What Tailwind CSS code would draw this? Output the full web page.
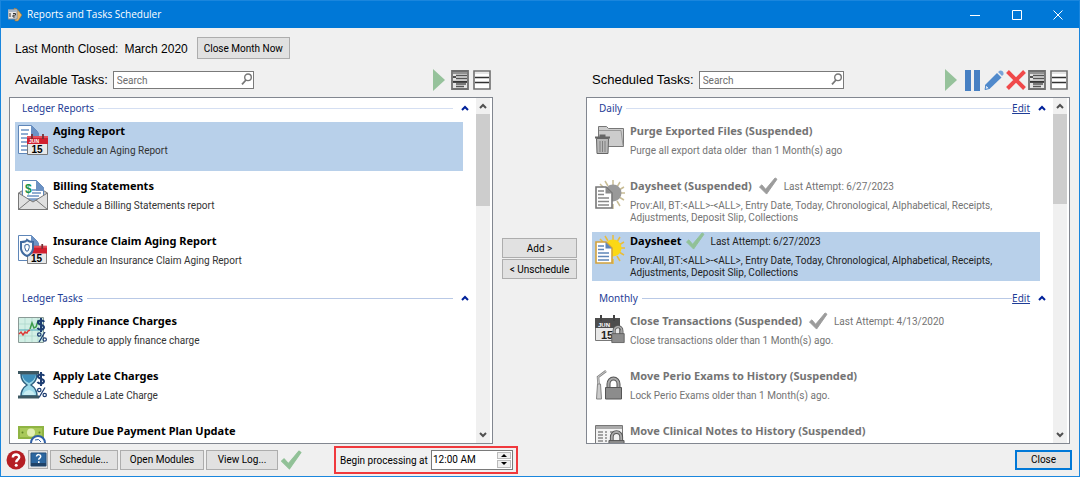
<!DOCTYPE html>
<html lang="en">
<head>
  <meta charset="UTF-8" />
  <meta name="viewport" content="width=device-width, initial-scale=1.0"/>
  <title>Reports and Tasks Scheduler</title>
  <script src="https://cdn.jsdelivr.net/npm/@tailwindcss/browser@4"></script>
</head>
<body class="h-screen flex flex-col overflow-hidden bg-[#f0f0f0] border border-[#1a86dd] text-black text-[10px] font-['Liberation_Sans',sans-serif]">

  <!-- Shared icons -->
  <svg class="hidden">
    <symbol id="caret" viewBox="0 0 8 8"><path d="M1 6l3-3 3 3" fill="none" stroke="currentColor" stroke-width="2"/></symbol>
    <symbol id="play" viewBox="0 0 12 22"><path d="M0 0l12 11L0 22z" fill="#96c29b"/></symbol>
    <symbol id="detail" viewBox="0 0 18 20">
      <path d="M1 1h16v18H1z" fill="#e4e4e4" stroke="#707070" stroke-width="1.800"/>
      <path d="M2 3h14M2 11.500h14" stroke="#777" stroke-width="1.600"/>
      <path d="M5 5.500h11M5 8.500h11M5 14h10M5 16.500h8" stroke="#555" stroke-width="1.400"/>
      <path d="M2 7h3M2 12h14" stroke="#222" stroke-width="1.500"/>
    </symbol>
    <symbol id="compact" viewBox="0 0 18 20">
      <path d="M1 1h16v18H1z" fill="#fff" stroke="#707070" stroke-width="1.600"/>
      <path d="M2 7.500h14M2 12.500h14" stroke="#333" stroke-width="1.700"/>
      <path d="M2 3h14" stroke="#ccc"/>
    </symbol>
    <symbol id="lens" viewBox="0 0 12 12"><circle cx="7" cy="4.300" r="3.300" fill="none" stroke="#777" stroke-width="1.400"/><path d="M5 7L1 11.300" stroke="#777" stroke-width="1.800"/></symbol>
    <symbol id="tick" viewBox="0 0 20 19"><path d="M1 10.500l2.500-2.200 4 4.700L17.500 1l2 1.300L8.500 18z" fill="currentColor" stroke="currentColor" stroke-linejoin="round"/></symbol>
    <symbol id="dollar" viewBox="0 0 10 14"><path d="M8.300 3.800C7.500 2.300 2 1.800 2 4.400s6 2 6 4.900-5.500 2.800-6.500.6M5 0v14" fill="none" stroke="#1d3d72" stroke-width="2"/></symbol>
    <symbol id="percent" viewBox="0 0 10 10"><circle cx="2.300" cy="2.500" r="1.700" fill="none" stroke="#1d3d72" stroke-width="1.200"/><circle cx="7.700" cy="7.500" r="1.700" fill="none" stroke="#1d3d72" stroke-width="1.200"/><path d="M8 0L2 10" stroke="#1d3d72" stroke-width="1.300"/></symbol>
    <symbol id="calendar" viewBox="0 0 21 22">
      <path d="M.500 3.500h20v18H.500z" fill="#e9e9e9" stroke="#777"/>
      <path d="M0 3h21v8H0z" fill="#d1202f"/>
      <path d="M0 3h21v2H0z" fill="#e5505a"/>
      <path d="M5 1v5M16 1v5" stroke="#773036" stroke-width="1.800"/>
    </symbol>
    <symbol id="lock" viewBox="0 0 18 24">
      <path d="M4 13V8a5 5.500 0 0 1 10 0v5" fill="none" stroke="#555" stroke-width="4"/>
      <path d="M4 13V8a5 5.500 0 0 1 10 0v5" fill="none" stroke="#aaa" stroke-width="2"/>
      <path d="M1 11.500h16V23H1z" fill="#8c8c8c" stroke="#555"/>
    </symbol>
  </svg>

  <!-- Title bar -->
  <header class="flex h-[27px] shrink-0 items-center bg-[#0078d7] pl-[7px] text-white">
    <svg class="h-[14px] w-[15px]" viewBox="0 0 15 14">
      <path d="M6 0l3 1 5 6-4 6H7z" fill="#e8b565" stroke="#8d6a3a" stroke-width=".600"/>
      <path d="M0 2h9v9H0z" fill="#e8e8e8" stroke="#7f8b99"/><path d="M0 1.500h9v2.500H0z" fill="#a9b6c5"/>
      <path d="M2 5v4M5 5.500h2.500v1.700H5v1.800h2.500" fill="none" stroke="#333"/>
    </svg>
    <h1 class="ml-1 grow font-['Open_Sans',sans-serif]">Reports and Tasks Scheduler</h1>
    <button type="button" aria-label="Minimize" class="flex h-full w-[42px] items-center justify-center"><svg class="h-[10px] w-[10px]" viewBox="0 0 10 10"><path d="M0 5.500h10" stroke="#fff"/></svg></button>
    <button type="button" aria-label="Maximize" class="flex h-full w-[41px] items-center justify-center"><svg class="h-[10px] w-[10px]" viewBox="0 0 10 10"><path d="M.500.500h9v9h-9z" fill="none" stroke="#fff"/></svg></button>
    <button type="button" aria-label="Close window" class="flex h-full w-[42px] items-center justify-center"><svg class="h-[10px] w-[10px]" viewBox="0 0 10 10"><path d="M.500.500l9 9M9.500.500l-9 9" stroke="#fff"/></svg></button>
  </header>

  <main class="flex min-h-0 grow flex-col px-2 pt-[9px]">
    <div class="flex h-[22px] shrink-0 items-center pl-[6px] text-[12px]">
      <span class="pt-px">Last Month Closed:</span>
      <span class="ml-[6px] pt-px">March 2020</span>
      <button type="button" class="ml-[9px] h-[22px] w-[93px] border border-[#adadad] bg-[#e1e1e1] text-[10px] font-['Roboto',sans-serif]">Close Month Now</button>
    </div>

    <div class="mt-2 flex min-h-0 grow">
      <!-- Available tasks -->
      <section class="flex min-w-0 flex-1 flex-col">
        <div class="flex h-[30px] shrink-0 items-center pb-2 pl-[6px] pt-1">
          <label for="searchAvailable" class="text-[13px]">Available Tasks:</label>
          <div class="relative ml-[5px]">
            <input id="searchAvailable" type="text" placeholder="Search" class="block h-[18px] w-[141px] border border-[#7a7a7a] bg-white px-[3px] font-['Roboto',sans-serif] text-[10px] placeholder:text-[#6d6d6d]">
            <svg class="absolute right-px top-[2px] h-3 w-3"><use href="#lens"/></svg>
          </div>
          <div class="ml-auto flex items-center gap-1 pr-[2px]">
            <button type="button" aria-label="Run now"><svg class="mr-[2px] h-[22px] w-3"><use href="#play"/></svg></button>
            <button type="button" aria-label="Detailed view"><svg class="h-5 w-[18px]"><use href="#detail"/></svg></button>
            <button type="button" aria-label="Compact view"><svg class="h-5 w-[18px]"><use href="#compact"/></svg></button>
          </div>
        </div>

        <div class="flex min-h-0 grow border border-[#828790] bg-white pr-[2px]">
          <div class="min-w-0 grow overflow-hidden pl-[5px] pr-[7px] pt-px">
            <section>
              <div class="flex h-[18px] items-center gap-1 pl-[7px] text-[#1e3c96] font-['Noto_Sans',sans-serif]">
                <h2>Ledger Reports</h2><hr class="grow border-[#d5dff2]">
                <button type="button" aria-label="Collapse Ledger Reports" class="ml-1"><svg class="h-2 w-2 text-[#00219a]"><use href="#caret"/></svg></button>
              </div>
              <ul class="mr-[6px] mt-[5px] flex flex-col gap-[6px]">
                <li class="flex h-[49px] gap-[5px] bg-[#b8d0ea] pl-[3px]">
                  <svg class="mt-[3px] h-[30px] w-[30px] shrink-0" viewBox="0 0 30 30">
                    <path d="M.500.500h13l6 6v22h-19z" fill="#fff" stroke="#5f86b8"/><path d="M13 0l8 8v3h-8z" fill="#6c92c4"/>
                    <path d="M3 5h8M3 9h7M3 13h6M3 17h6M3 21h6M3 25h6" stroke="#6c92c4" stroke-width="1.500"/>
                    <use href="#calendar" x="9" y="8" width="21" height="22"/>
                    <text x="11" y="18" font-size="5" font-weight="700" fill="#fff">JUN</text><text x="13.500" y="28" font-size="10" font-weight="700">15</text>
                  </svg>
                  <div class="pt-px"><h3 class="text-[11px] font-bold leading-[16px] font-['Noto_Sans',sans-serif]">Aging Report</h3><p class="mt-[6px] leading-3 text-[#333] font-['Roboto',sans-serif]">Schedule an Aging Report</p></div>
                </li>
                <li class="flex h-[49px] gap-[5px] pl-[3px]">
                  <svg class="mt-[3px] h-[30px] w-[30px] shrink-0" viewBox="0 0 30 30">
                    <path d="M.500 13L15 4l14.500 9v16.500H.500z" fill="#c4c4c4" stroke="#777"/>
                    <path d="M4.500.500h14l7 7V20h-21z" fill="#fff" stroke="#5f86b8"/><path d="M18 0l8 8v3h-8z" fill="#6c92c4"/>
                    <path d="M14 10h4M14 13h9M9 16h12M9 19h12" stroke="#6c92c4" stroke-width="1.500"/>
                    <text x="7" y="13" font-size="12" font-weight="700" fill="#16924b">$</text>
                    <path d="M.500 13L15 22l14.500-9v16.500H.500z" fill="#e0e0e0" stroke="#777"/><path d="M.500 29.500L12 20M29.500 29.500L18 20" stroke="#777"/>
                  </svg>
                  <div class="pt-px"><h3 class="text-[11px] font-bold leading-[16px] font-['Noto_Sans',sans-serif]">Billing Statements</h3><p class="mt-[6px] leading-3 text-[#333] font-['Roboto',sans-serif]">Schedule a Billing Statements report</p></div>
                </li>
                <li class="flex h-[49px] gap-[5px] pl-[3px]">
                  <svg class="mt-[3px] h-[30px] w-[30px] shrink-0" viewBox="0 0 30 30">
                    <path d="M.500.500h13l6 6v19h-19z" fill="#fff" stroke="#5f86b8"/><path d="M13 0l8 8v3h-8z" fill="#6c92c4"/>
                    <use href="#calendar" x="9" y="8" width="20" height="21"/>
                    <text x="13" y="27" font-size="10" font-weight="700">15</text>
                    <path d="M3 7q5 0 6-2 2 2 6 2v7q-1 5-6 7-5-2-6-7z" fill="#f4f7fb" stroke="#3f699f" stroke-width="2"/>
                    <path d="M7 10q2-1 4 0 1 2-1 6H8q-2-4-1-6z" fill="#fff" stroke="#3f699f"/>
                  </svg>
                  <div class="pt-px"><h3 class="text-[11px] font-bold leading-[16px] font-['Noto_Sans',sans-serif]">Insurance Claim Aging Report</h3><p class="mt-[6px] leading-3 text-[#333] font-['Roboto',sans-serif]">Schedule an Insurance Claim Aging Report</p></div>
                </li>
              </ul>
            </section>
            <section class="mt-2">
              <div class="flex h-[18px] items-center gap-1 pl-[7px] text-[#1e3c96] font-['Noto_Sans',sans-serif]">
                <h2>Ledger Tasks</h2><hr class="grow border-[#b9c9e6]">
                <button type="button" aria-label="Collapse Ledger Tasks" class="ml-1"><svg class="h-2 w-2 text-[#00219a]"><use href="#caret"/></svg></button>
              </div>
              <ul class="mr-[6px] mt-[5px] flex flex-col gap-[6px]">
                <li class="flex h-[49px] gap-[5px] pl-[3px]">
                  <svg class="mt-[3px] h-[30px] w-[30px] shrink-0" viewBox="0 0 30 30">
                    <path d="M.500 2.500h25v25H.500z" fill="#d2efe5" stroke="#8a9a96"/><path d="M7 3v24M14 3v24M20 3v24M1 9h24M1 21h24" stroke="#a9d6c8" stroke-width=".700"/>
                    <path d="M1 15h24" stroke="#4aa5b5"/>
                    <path d="M1 19l2-2 2 3 2-3 2 1 1-2 2-1" fill="none" stroke="#dc3b38" stroke-width="1.400"/><path d="M12 14l2-6 2 5 2-1 2-6 2 1" fill="none" stroke="#3b9b4a" stroke-width="1.500"/>
                    <use href="#dollar" x="18" y="3" width="10" height="14"/><use href="#percent" x="19" y="17" width="10" height="10"/>
                  </svg>
                  <div class="pt-px"><h3 class="text-[11px] font-bold leading-[16px] font-['Noto_Sans',sans-serif]">Apply Finance Charges</h3><p class="mt-[6px] leading-3 text-[#333] font-['Roboto',sans-serif]">Schedule to apply finance charge</p></div>
                </li>
                <li class="flex h-[49px] gap-[5px] pl-[3px]">
                  <svg class="mt-[3px] h-[30px] w-[30px] shrink-0" viewBox="0 0 30 30">
                    <path d="M3 4h16q0 7-6 11 6 4 6 11H3q0-7 6-11-6-4-6-11z" fill="#9bd8e8" stroke="#2f6180" stroke-width="1.500"/>
                    <path d="M4 5h14q-1 5-7 8-6-3-7-8z" fill="#3e8fbb"/><path d="M5 25q1-4 6-5 5 1 6 5z" fill="#c9eef3"/>
                    <path d="M0 2.500h21M0 27h21" stroke="#3d5862" stroke-width="3"/>
                    <use href="#dollar" x="18" y="2" width="10" height="14"/><use href="#percent" x="19" y="17" width="10" height="11"/>
                  </svg>
                  <div class="pt-px"><h3 class="text-[11px] font-bold leading-[16px] font-['Noto_Sans',sans-serif]">Apply Late Charges</h3><p class="mt-[6px] leading-3 text-[#333] font-['Roboto',sans-serif]">Schedule a Late Charge</p></div>
                </li>
                <li class="flex h-[49px] gap-[5px] pl-[3px]">
                  <svg class="mt-[3px] h-[30px] w-[30px] shrink-0" viewBox="0 0 30 30">
                    <path d="M0 1h26v13H0z" fill="#8fb443"/><path d="M2 3h22v9H2z" fill="#a9c95a"/><circle cx="13" cy="7.500" r="4" fill="#e2efb4"/>
                    <circle cx="4.500" cy="7.500" r="1" fill="#5f8524"/><circle cx="21.500" cy="7.500" r="1" fill="#5f8524"/>
                    <circle cx="20" cy="18" r="7" fill="#fff" stroke="#2e5fa7" stroke-width="2"/><path d="M17 15q4-2 6 2" fill="none" stroke="#2e5fa7"/>
                  </svg>
                  <div class="pt-px"><h3 class="text-[11px] font-bold leading-[16px] font-['Noto_Sans',sans-serif]">Future Due Payment Plan Update</h3></div>
                </li>
              </ul>
            </section>
          </div>
          <div class="flex w-[14px] shrink-0 flex-col items-center bg-[#f0f0f0] text-[#505050]">
            <svg class="my-1 h-2 w-2 shrink-0"><use href="#caret"/></svg>
            <div class="h-[92px] w-full bg-[#cdcdcd]"></div>
            <svg class="mb-1 mt-auto h-2 w-2 shrink-0 rotate-180"><use href="#caret"/></svg>
          </div>
        </div>
      </section>

      <!-- Move between lists -->
      <div class="flex w-[93px] shrink-0 flex-col items-center gap-px pt-[171px] font-['Roboto',sans-serif]">
        <button type="button" class="h-5 w-[75px] border border-[#adadad] bg-[#e1e1e1]">Add &gt;</button>
        <button type="button" class="h-5 w-[75px] border border-[#adadad] bg-[#e1e1e1]">&lt; Unschedule</button>
      </div>

      <!-- Scheduled tasks -->
      <section class="mr-px flex min-w-0 flex-1 flex-col">
        <div class="flex h-[30px] shrink-0 items-center pb-2 pl-[6px] pt-1">
          <label for="searchScheduled" class="text-[13px]">Scheduled Tasks:</label>
          <div class="relative ml-[5px]">
            <input id="searchScheduled" type="text" placeholder="Search" class="block h-[18px] w-[145px] border border-[#7a7a7a] bg-white px-[3px] font-['Roboto',sans-serif] text-[10px] placeholder:text-[#6d6d6d]">
            <svg class="absolute right-px top-[2px] h-3 w-3"><use href="#lens"/></svg>
          </div>
          <div class="ml-auto flex items-center gap-1 pr-[2px]">
            <button type="button" aria-label="Run now"><svg class="mr-1 h-[22px] w-3"><use href="#play"/></svg></button>
            <button type="button" aria-label="Suspend"><svg class="h-[21px] w-[15px]" viewBox="0 0 15 21"><path d="M0 0h6v21H0zM9 0h6v21H9z" fill="#4780c3"/></svg></button>
            <button type="button" aria-label="Edit task"><svg class="h-5 w-5" viewBox="0 0 20 20"><path d="M1 15L13 3l4.500 4.500L6 18.500l-5 1z" fill="#5089cb"/><path d="M14 2l2-1.500q4 0 3.500 4L18 6z" fill="#78a4d8"/><path d="M2 15l3.500 3.500L1 19.500z" fill="#d7e4f4" stroke="#5089cb"/></svg></button>
            <button type="button" aria-label="Delete task" class="-mx-[2px]"><svg class="h-5 w-5" viewBox="0 0 20 20"><path d="M1.500 1.500l17 17M18.500 1.500l-17 17" stroke="#f0494a" stroke-width="4"/></svg></button>
            <button type="button" aria-label="Detailed view"><svg class="h-5 w-[18px]"><use href="#detail"/></svg></button>
            <button type="button" aria-label="Compact view"><svg class="h-5 w-[18px]"><use href="#compact"/></svg></button>
          </div>
        </div>

        <div class="flex min-h-0 grow border border-[#828790] bg-white pr-[2px]">
          <div class="min-w-0 grow overflow-hidden pl-[5px] pr-[7px] pt-px">
            <section>
              <div class="flex h-[18px] items-center gap-1 pl-[7px] text-[#1e3c96] font-['Noto_Sans',sans-serif]">
                <h2>Daily</h2><hr class="grow border-[#d5dff2]">
                <a href="#" class="-ml-1 underline">Edit</a>
                <button type="button" aria-label="Collapse Daily" class="ml-1"><svg class="h-2 w-2 text-[#00219a]"><use href="#caret"/></svg></button>
              </div>
              <ul class="mr-[6px] mt-[5px] flex flex-col gap-[6px]">
                <li class="flex h-[49px] gap-[5px] pl-[3px] text-[#747474]">
                  <svg class="mt-[3px] h-[30px] w-[30px] shrink-0" viewBox="0 0 30 30">
                    <path d="M3.500 20V1.500h8l2 2h15v18h-25z" fill="#ccc" stroke="#777"/><path d="M4 5.500h22l2 15" fill="none" stroke="#999"/>
                    <path d="M1.500 13.500h12l-.500 15H2z" fill="#b8b8b8" stroke="#666"/><path d="M0 12.500h15M4.500 10.500h6" stroke="#666" stroke-width="2"/><path d="M5 16v11M7.500 16v11M10 16v11" stroke="#808080"/>
                  </svg>
                  <div class="pt-px"><h3 class="text-[11px] font-bold leading-[16px] font-['Noto_Sans',sans-serif]">Purge Exported Files (Suspended)</h3><p class="mt-[6px] leading-3 font-['Roboto',sans-serif]">Purge all export data older&nbsp; than 1 Month(s) ago</p></div>
                </li>
                <li class="flex h-[49px] gap-[5px] pl-[3px] text-[#747474]">
                  <svg class="mt-[3px] h-[30px] w-[30px] shrink-0" viewBox="0 0 30 30">
                    <path d="M18 0v5M10 1l3 5M25 2l-3 5M29 7l-5 3M30 13h-5M29 20l-5-3M25 26l-3-5M18 29v-5M5 4l4 4" stroke="#c9bd95" stroke-width="1.500"/><circle cx="18" cy="13" r="8.500" fill="#999"/>
                    <path d="M1 7h10l6 6v15H1z" fill="#fff" stroke="#777" stroke-width="1.600"/><path d="M10.500 7v6.500H17z" fill="#8a8a8a"/><path d="M3 11h6M3 14.500h6M3 18h11M3 21.500h11M3 25h11" stroke="#888" stroke-width="1.300"/>
                  </svg>
                  <div class="pt-px">
                    <div class="flex h-4 items-center"><h3 class="text-[11px] font-bold font-['Noto_Sans',sans-serif]">Daysheet (Suspended)</h3><svg class="ml-[6px] h-[18px] w-5 text-[#9c9c9c]"><use href="#tick"/></svg><span class="ml-[6px] font-['Roboto',sans-serif]">Last Attempt: 6/27/2023</span></div>
                    <p class="mt-[6px] leading-3 font-['Roboto',sans-serif]">Prov:All, BT:&lt;ALL&gt;-&lt;ALL&gt;, Entry Date, Today, Chronological, Alphabetical, Receipts, Adjustments, Deposit Slip, Collections</p>
                  </div>
                </li>
                <li class="flex h-[49px] gap-[5px] bg-[#b8d0ea] pl-[3px]">
                  <svg class="mt-[3px] h-[30px] w-[30px] shrink-0" viewBox="0 0 30 30">
                    <path d="M18 0v5M10 1l3 5M25 2l-3 5M29 7l-5 3M30 13h-5M29 20l-5-3M25 26l-3-5M18 29v-5M5 4l4 4" stroke="#e9bd3d" stroke-width="1.500"/><circle cx="18" cy="13" r="8.500" fill="#fbd816"/>
                    <path d="M1 7h10l6 6v15H1z" fill="#fff" stroke="#d2a23c" stroke-width="1.600"/><path d="M10.500 7v6.500H17z" fill="#5f86b8"/><path d="M3 11h6M3 14.500h6M3 18h11M3 21.500h11M3 25h11" stroke="#5f86b8" stroke-width="1.300"/>
                  </svg>
                  <div class="pt-px text-[#222]">
                    <div class="flex h-4 items-center"><h3 class="text-[11px] font-bold text-black font-['Noto_Sans',sans-serif]">Daysheet</h3><svg class="ml-[3px] h-[18px] w-5 text-[#91c197]"><use href="#tick"/></svg><span class="ml-[6px] font-['Roboto',sans-serif]">Last Attempt: 6/27/2023</span></div>
                    <p class="mt-[6px] leading-3 font-['Roboto',sans-serif]">Prov:All, BT:&lt;ALL&gt;-&lt;ALL&gt;, Entry Date, Today, Chronological, Alphabetical, Receipts, Adjustments, Deposit Slip, Collections</p>
                  </div>
                </li>
              </ul>
            </section>
            <section class="mt-2">
              <div class="flex h-[18px] items-center gap-1 pl-[7px] text-[#1e3c96] font-['Noto_Sans',sans-serif]">
                <h2>Monthly</h2><hr class="grow border-[#b9c9e6]">
                <a href="#" class="-ml-1 underline">Edit</a>
                <button type="button" aria-label="Collapse Monthly" class="ml-1"><svg class="h-2 w-2 text-[#00219a]"><use href="#caret"/></svg></button>
              </div>
              <ul class="mr-[6px] mt-[5px] flex flex-col gap-[6px]">
                <li class="flex h-[49px] gap-[5px] pl-[3px] text-[#747474]">
                  <svg class="mt-[3px] h-[30px] w-[30px] shrink-0" viewBox="0 0 30 30">
                    <path d="M.500 4.500h24v21H.500z" fill="#e8e8e8" stroke="#777"/><path d="M0 3h25v10H0z" fill="#4d4d4d"/><path d="M6 0v6M19 0v6" stroke="#444" stroke-width="2"/>
                    <text x="3" y="12" font-size="6" font-weight="700" fill="#fff">JUN</text><text x="6" y="24" font-size="11" font-weight="700" fill="#222">15</text>
                    <use href="#lock" x="16" y="9" width="14" height="20"/>
                  </svg>
                  <div class="pt-px">
                    <div class="flex h-4 items-center"><h3 class="text-[11px] font-bold font-['Noto_Sans',sans-serif]">Close Transactions (Suspended)</h3><svg class="ml-[6px] h-[18px] w-5 text-[#9c9c9c]"><use href="#tick"/></svg><span class="ml-[6px] font-['Roboto',sans-serif]">Last Attempt: 4/13/2020</span></div>
                    <p class="mt-[6px] leading-3 font-['Roboto',sans-serif]">Close transactions older than 1 Month(s) ago.</p>
                  </div>
                </li>
                <li class="flex h-[49px] gap-[5px] pl-[3px] text-[#747474]">
                  <svg class="mt-[3px] h-[30px] w-[30px] shrink-0" viewBox="0 0 30 30">
                    <path d="M11 1L3 7l1 13" fill="none" stroke="#858585" stroke-width="2.500"/><path d="M11 1L3 7l1 13" fill="none" stroke="#ddd" stroke-width=".800"/>
                    <path d="M2.500 14h3l1 15h-5z" fill="#ccc" stroke="#858585"/>
                    <use href="#lock" x="9" y="6" width="19" height="24"/>
                  </svg>
                  <div class="pt-px"><h3 class="text-[11px] font-bold leading-[16px] font-['Noto_Sans',sans-serif]">Move Perio Exams to History (Suspended)</h3><p class="mt-[6px] leading-3 font-['Roboto',sans-serif]">Lock Perio Exams older than 1 Month(s) ago.</p></div>
                </li>
                <li class="flex h-[49px] gap-[5px] pl-[3px] text-[#747474]">
                  <svg class="mt-[3px] h-[30px] w-[30px] shrink-0" viewBox="0 0 30 30">
                    <path d="M.500.500h27v24H.500z" fill="#f2f2f2" stroke="#777"/><path d="M1 2.500h26" stroke="#aaa" stroke-width="3"/>
                    <path d="M3 7h5M3 10h5M3 13h5M3 16h5M10 7h2M10 10h2M10 13h2M10 16h2M15 7h10" stroke="#888" stroke-width="1.400"/>
                    <use href="#lock" x="13" y="4" width="17" height="24"/>
                  </svg>
                  <div class="pt-px"><h3 class="text-[11px] font-bold leading-[16px] font-['Noto_Sans',sans-serif]">Move Clinical Notes to History (Suspended)</h3></div>
                </li>
              </ul>
            </section>
          </div>
          <div class="flex w-[14px] shrink-0 flex-col items-center bg-[#f0f0f0] text-[#505050]">
            <svg class="my-1 h-2 w-2 shrink-0"><use href="#caret"/></svg>
            <div class="h-[90px] w-full bg-[#cdcdcd]"></div>
            <svg class="mb-1 mt-auto h-2 w-2 shrink-0 rotate-180"><use href="#caret"/></svg>
          </div>
        </div>
      </section>
    </div>
  </main>

  <!-- Bottom bar -->
  <footer class="flex h-8 shrink-0 items-center gap-[2px] pb-px pl-[5px] pr-[7px] font-['Roboto',sans-serif]">
    <button type="button" aria-label="Help"><svg class="h-5 w-5" viewBox="0 0 20 20"><circle cx="10" cy="10" r="9.500" fill="#b51f24"/><path d="M6.800 7.500c.200-4 6.600-3.800 6.400-.300-.100 2.300-3 2.300-3 5" fill="none" stroke="#fff" stroke-width="2.400"/><circle cx="10.200" cy="15.200" r="1.500" fill="#fff"/></svg></button>
    <button type="button" aria-label="Online help" class="flex h-[19px] w-5 items-center justify-center border border-[#adadad] bg-[#e1e1e1]"><svg class="h-[15px] w-[17px]" viewBox="0 0 17 15"><path d="M1 1h15v13H1z" fill="#2c67a0" stroke="#23507e"/><path d="M1 11h15v3H1z" fill="#1f4267"/><path d="M6.500 4.500c0-2.600 4.300-2.400 4.200 0 0 1.600-2 1.600-2 3.300" fill="none" stroke="#fff" stroke-width="1.500"/><path d="M8 9.300h1.600V11H8z" fill="#fff"/></svg></button>
    <button type="button" class="h-5 w-[68px] border border-[#adadad] bg-[#e1e1e1]">Schedule...</button>
    <button type="button" class="h-5 w-[84px] border border-[#adadad] bg-[#e1e1e1]">Open Modules</button>
    <button type="button" class="h-5 w-[72px] border border-[#adadad] bg-[#e1e1e1]">View Log...</button>
    <svg class="h-5 w-[22px] text-[#91c197]"><use href="#tick"/></svg>
    <div class="ml-[30px] flex h-7 w-[184px] items-center border-2 border-[#f0393d] pl-1">
      <label for="beginAt" class="pt-px">Begin processing at</label>
      <div class="ml-auto mr-[3px] flex h-5 w-[82px] border border-[#7a7a7a] bg-white p-px">
        <input id="beginAt" type="text" value="12:00 AM" class="w-0 min-w-0 grow">
        <div class="flex w-[14px] flex-col gap-px">
          <button type="button" aria-label="Later" class="flex grow items-center justify-center border border-[#bbb] bg-[#f0f0f0]"><svg class="h-[3px] w-[6px]" viewBox="0 0 6 3"><path d="M0 3l3-3 3 3z"/></svg></button>
          <button type="button" aria-label="Earlier" class="flex grow items-center justify-center border border-[#bbb] bg-[#f0f0f0]"><svg class="h-[3px] w-[6px]" viewBox="0 0 6 3"><path d="M0 0l3 3 3-3z"/></svg></button>
        </div>
      </div>
    </div>
    <button type="button" class="ml-auto h-5 w-[57px] border-2 border-[#0078d7] bg-[#e1e1e1]">Close</button>
  </footer>
</body>
</html>
